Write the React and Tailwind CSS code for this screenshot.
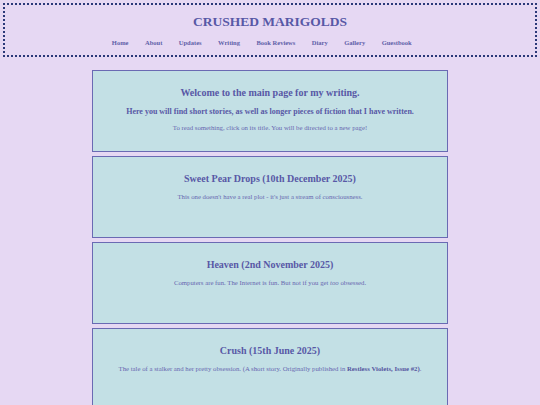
const navLinks = ["Home", "About", "Updates", "Writing", "Book Reviews", "Diary", "Gallery", "Guestbook"];

const stories = [
  {
    title: "Sweet Pear Drops (10th December 2025)",
    blurb: <>This one doesn't have a real plot - it's just a stream of consciousness.</>,
  },
  {
    title: "Heaven (2nd November 2025)",
    blurb: (
      <>
        Computers are fun. The Internet is fun. But not if you get <i>too</i> obsessed.
      </>
    ),
  },
  {
    title: "Crush (15th June 2025)",
    blurb: (
      <>
        The tale of a stalker and her pretty obsession. (A short story. Originally published in{" "}
        <b className="text-[#55559f]">Restless Violets, Issue #2)</b>.
      </>
    ),
  },
];

const Box = ({ children }) => (
  <div className="h-[82px] w-[356px] border border-[#6a6ab3] bg-[#c3e0e5] pt-[16px] text-center">
    {children}
  </div>
);

export default function App() {
  return (
    <div
      className="min-h-[405px] bg-[#e6d8f3] pt-[3px] text-[#6767b0]"
      style={{ fontFamily: '"Liberation Serif", "Times New Roman", serif' }}
    >
      {/* header */}
      <header className="mx-[3px] border-2 border-dotted border-[#2a3878] pt-[9px] pb-[8px] text-center">
        <h1 className="text-[13.5px] leading-[16px] font-bold text-[#5858a6]">CRUSHED MARIGOLDS</h1>
        <nav className="mt-[9px] flex justify-center text-[6.5px] leading-[8px] font-bold text-[#5f5fa8]">
          {navLinks.map((link) => (
            <a key={link} href="#" className="mr-[16.5px]">
              {link}
            </a>
          ))}
        </nav>
      </header>

      <main className="mt-[13px] flex flex-col items-center gap-[4px]">
        <Box>
          <h2 className="text-[10px] leading-[12px] font-bold text-[#5858a6]">
            Welcome to the main page for my writing.
          </h2>
          <p className="mt-[8px] text-[8px] leading-[10px] font-bold text-[#5858a6]">
            Here you will find short stories, as well as longer pieces of fiction that I have written.
          </p>
          <p className="mt-[7px] text-[6.75px] leading-[8px]">
            To read something, click on its title. You will be directed to a new page!
          </p>
        </Box>

        {stories.map((story) => (
          <Box key={story.title}>
            <h2 className="text-[10px] leading-[12px] font-bold text-[#5858a6]">{story.title}</h2>
            <p className="mt-[8px] text-[6.75px] leading-[8px]">{story.blurb}</p>
          </Box>
        ))}
      </main>
    </div>
  );
}
